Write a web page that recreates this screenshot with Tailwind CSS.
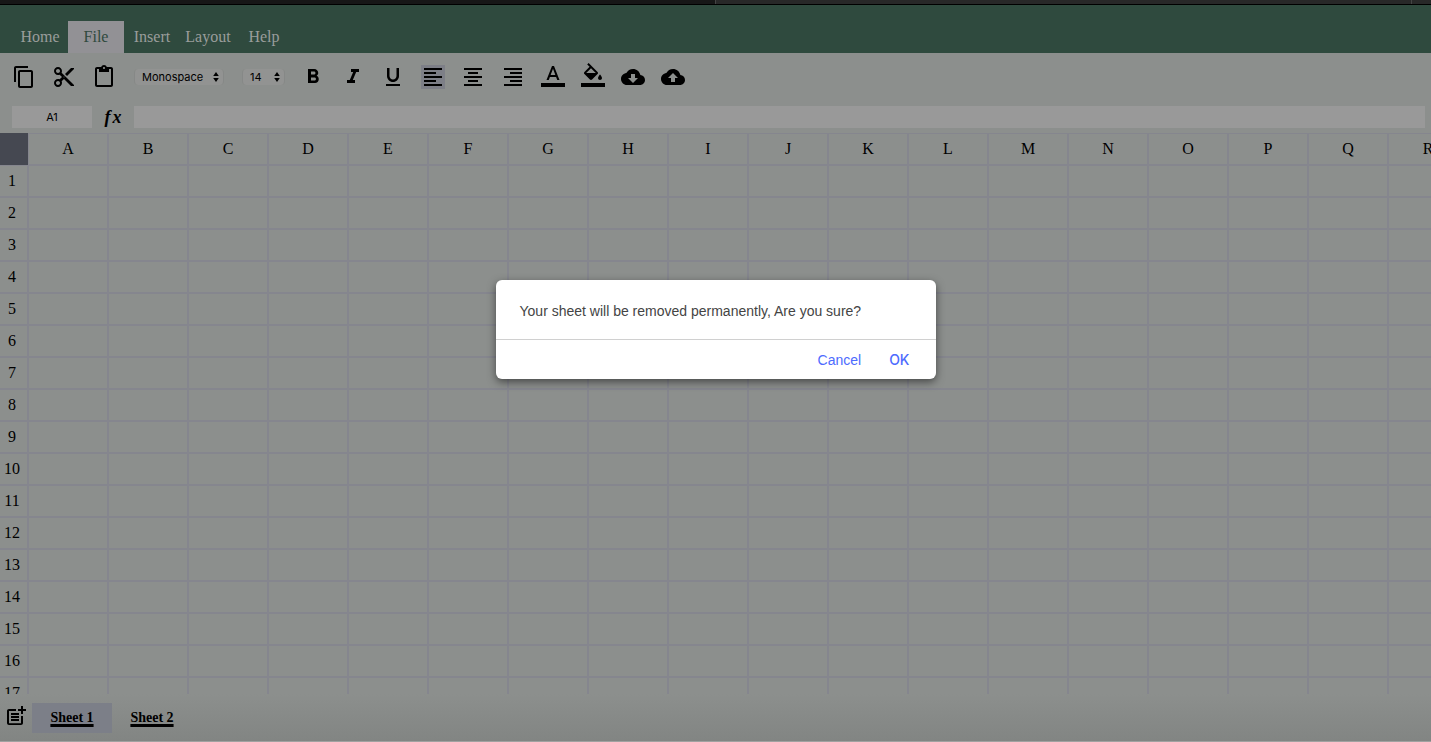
<!DOCTYPE html>
<html lang="en">
<head>
<meta charset="utf-8">
<title>Spreadsheet</title>
<script src="https://cdn.jsdelivr.net/npm/@tailwindcss/browser@4"></script>
</head>
<body class="relative flex h-screen flex-col overflow-hidden bg-[#8c8f8d] font-['Liberation_Serif',serif] text-base text-black">
  <div class="flex h-[5px] shrink-0 border-b border-black">
    <div class="flex-1 bg-[#171717]"></div>
    <div class="flex flex-1 justify-end border-l border-[#444] bg-[#282828]"><div class="w-5 border-l border-[#444]"></div></div>
  </div>

  <nav class="flex h-12 shrink-0 items-end bg-[#2f4a3e] pl-3 text-[#9a9d9b]">
    <a href="#" class="flex h-8 w-14 items-center justify-center">Home</a>
    <a href="#" class="flex h-8 w-14 items-center justify-center bg-[#929195] text-[#2f4a3e]">File</a>
    <a href="#" class="flex h-8 w-14 items-center justify-center">Insert</a>
    <a href="#" class="flex h-8 w-14 items-center justify-center">Layout</a>
    <a href="#" class="flex h-8 w-14 items-center justify-center">Help</a>
  </nav>

  <div class="flex h-12 shrink-0 items-center gap-4 pl-3 font-[Inter,sans-serif] text-[11px]">
    <button aria-label="Copy" class="size-6"><svg viewBox="0 0 24 24" class="size-6"><path d="M16 1H4c-1.100 0-2 .9-2 2v14h2V3h12V1zm3 4H8c-1.100 0-2 .9-2 2v14c0 1.100.9 2 2 2h11c1.100 0 2-.9 2-2V7c0-1.100-.9-2-2-2zm0 16H8V7h11v14z"/></svg></button>
    <button aria-label="Cut" class="size-6"><svg viewBox="0 0 24 24" class="size-6"><path d="M9.640 7.640c.23-.5.360-1.050.360-1.640 0-2.210-1.790-4-4-4S2 3.790 2 6s1.790 4 4 4c.59 0 1.140-.13 1.640-.36L10 12l-2.360 2.360C7.140 14.130 6.590 14 6 14c-2.210 0-4 1.790-4 4s1.790 4 4 4 4-1.790 4-4c0-.59-.13-1.140-.36-1.640L12 14l7 7h3v-1L9.640 7.640zM6 8c-1.100 0-2-.89-2-2s.9-2 2-2 2 .89 2 2-.9 2-2 2zm0 12c-1.100 0-2-.89-2-2s.9-2 2-2 2 .89 2 2-.9 2-2 2zm6-7.500c-.28 0-.5-.22-.5-.5s.22-.5.5-.5.5.22.5.5-.22.5-.5.5zM19 3l-6 6 2 2 7-7V3z"/></svg></button>
    <button aria-label="Paste" class="size-6"><svg viewBox="0 0 24 24" class="size-6"><path d="M19 2h-4.180C14.400.84 13.300 0 12 0c-1.300 0-2.400.84-2.820 2H5c-1.100 0-2 .9-2 2v16c0 1.100.9 2 2 2h14c1.100 0 2-.9 2-2V4c0-1.100-.9-2-2-2zm-7 0c.55 0 1 .45 1 1s-.45 1-1 1-1-.45-1-1 .45-1 1-1zm7 18H5V4h2v3h10V4h2v16z"/></svg></button>
    <div class="relative ml-0.5 h-4 w-[90px]">
      <select aria-label="Font family" class="block h-4 w-full appearance-none rounded border-x border-[#868887] bg-[#929392] pl-[7px] leading-4"><option>Monospace</option></select>
      <svg viewBox="0 0 8 12" class="pointer-events-none absolute top-0.5 right-1 h-3 w-2"><path d="M4 1 6.800 5H1.200zM4 11 6.800 7H1.200z"/></svg>
    </div>
    <div class="relative ml-0.5 h-4 w-[43px]">
      <select aria-label="Font size" class="block h-4 w-full appearance-none rounded border-x border-[#868887] bg-[#929392] pl-[7px] leading-4"><option>14</option></select>
      <svg viewBox="0 0 8 12" class="pointer-events-none absolute top-0.5 right-1 h-3 w-2"><path d="M4 1 6.800 5H1.200zM4 11 6.800 7H1.200z"/></svg>
    </div>
    <button aria-label="Bold" class="size-6"><svg viewBox="0 0 24 24" class="size-6"><path d="M15.600 10.790c.97-.67 1.650-1.770 1.650-2.790 0-2.260-1.750-4-4-4H7v14h7.040c2.090 0 3.710-1.700 3.710-3.790 0-1.520-.86-2.820-2.150-3.420zM10 6.500h3c.83 0 1.500.67 1.500 1.500s-.67 1.500-1.500 1.500h-3v-3zm3.500 9H10v-3h3.500c.83 0 1.500.67 1.500 1.500s-.67 1.500-1.500 1.500z"/></svg></button>
    <button aria-label="Italic" class="size-6"><svg viewBox="0 0 24 24" class="size-6"><path d="M10 4v3h2.210l-3.420 8H6v3h8v-3h-2.210l3.420-8H18V4z"/></svg></button>
    <button aria-label="Underline" class="size-6"><svg viewBox="0 0 24 24" class="size-6"><path d="M12 17c3.310 0 6-2.690 6-6V3h-2.500v8c0 1.930-1.570 3.500-3.500 3.500S8.500 12.930 8.500 11V3H6v8c0 3.310 2.690 6 6 6zm-7 2v2h14v-2H5z"/></svg></button>
    <button aria-label="Align left" class="size-6 bg-[#7d7f87]"><svg viewBox="0 0 24 24" class="size-6"><path d="M15 15H3v2h12v-2zm0-8H3v2h12V7zM3 13h18v-2H3v2zm0 8h18v-2H3v2zM3 3v2h18V3H3z"/></svg></button>
    <button aria-label="Align center" class="size-6"><svg viewBox="0 0 24 24" class="size-6"><path d="M7 15v2h10v-2H7zm-4 6h18v-2H3v2zm0-8h18v-2H3v2zm4-6v2h10V7H7zM3 3v2h18V3H3z"/></svg></button>
    <button aria-label="Align right" class="size-6"><svg viewBox="0 0 24 24" class="size-6"><path d="M3 21h18v-2H3v2zm6-4h12v-2H9v2zm-6-4h18v-2H3v2zm6-4h12V7H9v2zM3 3v2h18V3H3z"/></svg></button>
    <button aria-label="Text color" class="size-6"><svg viewBox="0 0 24 24" class="size-6"><path d="M0 18h24v4H0zM11 1 5.500 15h2.250l1.120-3h6.250l1.120 3h2.250L13 1h-2zm-1.380 9L12 3.670 14.380 10H9.620z"/></svg></button>
    <button aria-label="Fill color" class="size-6"><svg viewBox="0 0 24 24" class="size-6 overflow-visible"><path d="M16.560 6.940 7.620-2 6.210-.59l2.380 2.380-5.150 5.150c-.59.59-.59 1.540 0 2.120l5.500 5.500c.29.29.68.440 1.060.440s.77-.15 1.060-.44l5.500-5.500c.59-.58.59-1.530 0-2.120zM5.210 8 10 3.210 14.790 8H5.210zM19 9.500s-2 2.170-2 3.500c0 1.100.9 2 2 2s2-.9 2-2c0-1.330-2-3.500-2-3.500zM0 18h24v4H0z"/></svg></button>
    <button aria-label="Download" class="size-6"><svg viewBox="0 0 24 24" class="size-6"><path d="M19.350 10.040C18.670 6.590 15.640 4 12 4 9.110 4 6.600 5.640 5.350 8.040 2.340 8.360 0 10.910 0 14c0 3.310 2.690 6 6 6h13c2.760 0 5-2.240 5-5 0-2.640-2.050-4.780-4.650-4.960zM17 13l-5 5-5-5h3V9h4v4h3z"/></svg></button>
    <button aria-label="Upload" class="size-6"><svg viewBox="0 0 24 24" class="size-6"><path d="M19.350 10.040C18.670 6.590 15.640 4 12 4 9.110 4 6.600 5.640 5.350 8.040 2.340 8.360 0 10.910 0 14c0 3.310 2.690 6 6 6h13c2.760 0 5-2.240 5-5 0-2.640-2.050-4.780-4.650-4.960zM14 13v4h-4v-4H7l5-5 5 5h-3z"/></svg></button>
  </div>

  <div class="flex h-8 shrink-0 items-center pr-1.5 pl-3">
    <input aria-label="Cell address" value="A1" class="h-[22px] w-20 bg-[#999] text-center font-[Inter,sans-serif] text-[11px]">
    <span class="flex w-[42px] justify-center gap-0.5 text-lg leading-5 font-bold italic"><span>f</span><span>x</span></span>
    <input aria-label="Formula" class="h-[22px] min-w-0 flex-1 bg-[#999]">
  </div>

  <main class="min-h-0 flex-1 overflow-hidden">
    <table class="w-[1468px] table-fixed border-separate border-spacing-0">
      <thead><tr id="columns" class="h-8"><th class="w-7 bg-[#454851]"></th></tr></thead>
      <tbody id="rows"></tbody>
    </table>
  </main>

  <footer class="flex h-12 shrink-0 items-center border-b border-[#a0a2a1] bg-linear-to-b from-[#8c8f8d] to-[#828583] text-sm font-bold">
    <button aria-label="Add sheet" class="flex w-8 justify-center"><svg viewBox="0 2 24 24" class="size-6"><path d="M17 19.220H5V7h7V5H5c-1.100 0-2 .9-2 2v12c0 1.100.9 2 2 2h12c1.100 0 2-.9 2-2v-7h-2v7.220z"/><path d="M19 2h-2v3h-3v2h3v3h2V7h3V5h-3zM7 9h8v2H7zM7 12h8v2H7zM7 15h8v2H7z"/></svg></button>
    <button class="h-[30px] w-20 bg-[#7c7f88] underline decoration-[3px] underline-offset-2">Sheet 1</button>
    <button class="h-[30px] w-20 underline decoration-[3px] underline-offset-2">Sheet 2</button>
  </footer>

  <div role="dialog" aria-modal="true" aria-labelledby="message" class="absolute top-[280px] left-1/2 w-[440px] -translate-x-1/2 rounded-md bg-white font-['Liberation_Sans',sans-serif] text-sm shadow-[0_3px_9px_rgba(0,0,0,0.5)]">
    <p id="message" class="px-6 pt-5 pb-[17px] leading-[22px] text-[#444]">Your sheet will be removed permanently, Are you sure?</p>
    <div class="flex h-10 items-center justify-end gap-2 border-t border-[#d0d0d0] pr-4 text-[#4d6bfe]">
      <button class="px-2.5">Cancel</button>
      <button class="px-2.5 font-[Inter,sans-serif] font-medium">OK</button>
    </div>
  </div>

  <script>
    const columns = document.getElementById('columns');
    const rows = document.getElementById('rows');
    for (const letter of 'ABCDEFGHIJKLMNOPQR') {
      columns.insertAdjacentHTML('beforeend', `<th scope="col" class="w-20 border border-[#85868e] p-0 font-normal">${letter}</th>`);
    }
    for (let n = 1; n <= 17; n++) {
      const cells = '<td class="border border-[#85868e]"></td>'.repeat(18);
      rows.insertAdjacentHTML('beforeend', `<tr class="h-8"><th scope="row" class="border-y border-r border-[#85868e] p-0 pr-[3px] font-normal">${n}</th>${cells}</tr>`);
    }
  </script>
</body>
</html>
